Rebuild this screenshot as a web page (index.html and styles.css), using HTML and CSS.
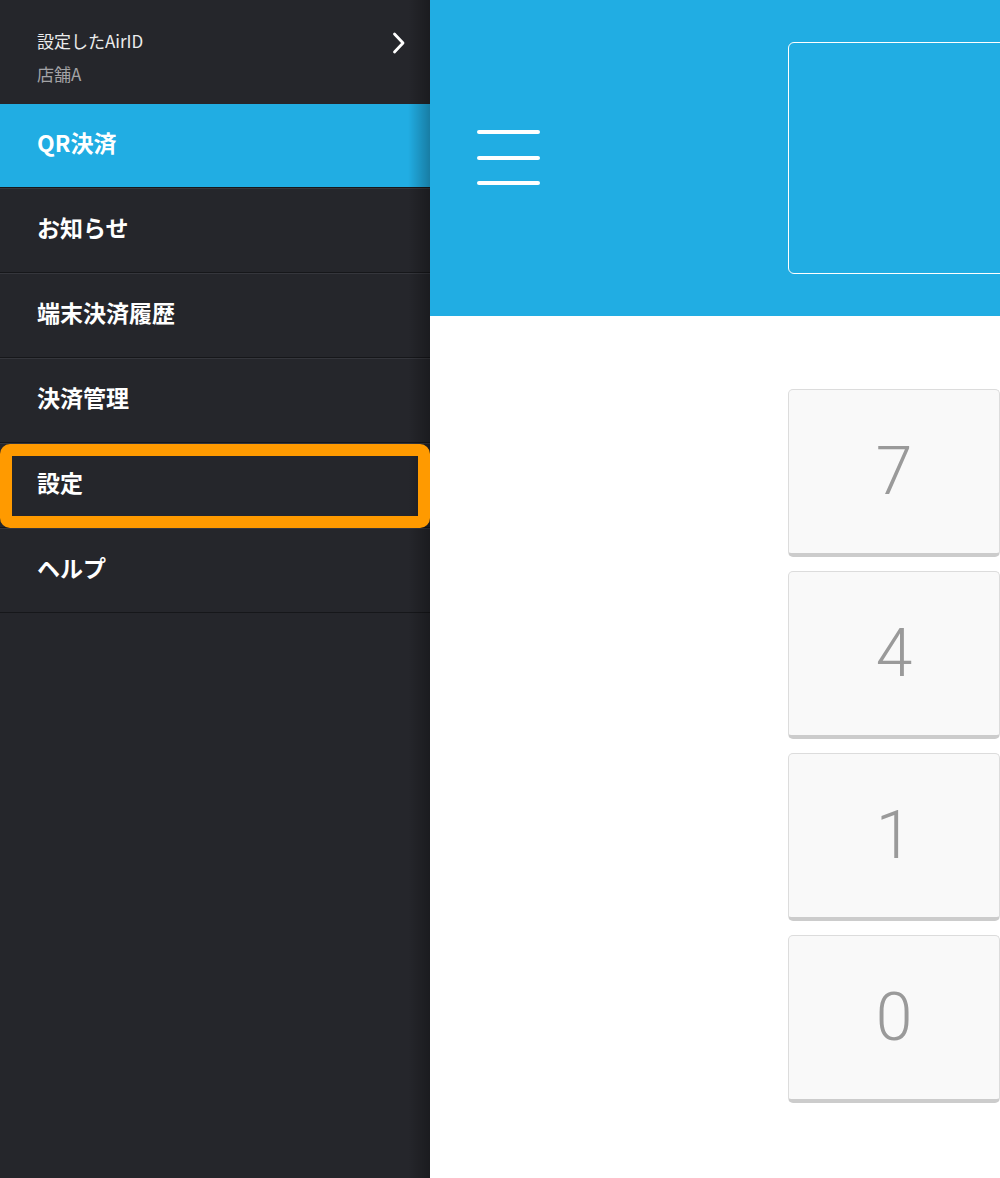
FILE: index.html
```html
<!DOCTYPE html>
<html lang="ja">
<head>
<meta charset="utf-8">
<title>QR決済</title>
<link rel="stylesheet" href="styles.css">
</head>
<body>
<div class="app">
  <nav class="sidebar">
    <div class="account">
      <div class="account-text">
        <div class="account-title">設定したAirID</div>
        <div class="account-store">店舗A</div>
      </div>
      <svg class="chevron" width="14" height="22" viewBox="0 0 14 22"><path d="M2.5 2 L11 11 L2.5 20" fill="none" stroke="#ffffff" stroke-width="2.8" stroke-linecap="round" stroke-linejoin="round"/></svg>
    </div>
    <ul class="menu">
      <li class="menu-item active">QR決済</li>
      <li class="menu-item">お知らせ</li>
      <li class="menu-item">端末決済履歴</li>
      <li class="menu-item">決済管理</li>
      <li class="menu-item highlighted">設定</li>
      <li class="menu-item">ヘルプ</li>
    </ul>
  </nav>
  <main class="main">
    <header class="topbar">
      <div class="hamburger"><span></span><span></span><span></span></div>
      <div class="amount-box"></div>
    </header>
    <section class="keypad">
      <div class="key">7</div>
      <div class="key">4</div>
      <div class="key">1</div>
      <div class="key">0</div>
    </section>
  </main>
</div>
</body>
</html>
```
FILE: styles.css
```css
* { box-sizing: border-box; }
html, body {
  margin: 0;
  padding: 0;
  width: 1000px;
  height: 1178px;
  overflow: hidden;
  background: #ffffff;
  font-family: "Noto Sans CJK JP", "Noto Sans", sans-serif;
}
.app {
  display: flex;
  width: 1000px;
  height: 1178px;
}
.sidebar {
  position: relative;
  width: 430px;
  flex: 0 0 430px;
  height: 1178px;
  background: #25262b;
  color: #ffffff;
}
.sidebar::after {
  content: "";
  position: absolute;
  z-index: 1;
  top: 0;
  right: 0;
  width: 22px;
  height: 100%;
  background: linear-gradient(to right, rgba(0,0,0,0), rgba(0,0,0,0.28));
  pointer-events: none;
}
.account {
  height: 104px;
  display: flex;
  align-items: flex-start;
  justify-content: space-between;
  padding: 29px 24px 0 37px;
}
.account-title {
  font-size: 17px;
  line-height: 24px;
  color: #ececec;
}
.account-store {
  font-size: 17px;
  line-height: 24px;
  margin-top: 9px;
  color: #a3a3a6;
}
.chevron {
  margin-top: 3px;
}
.menu {
  list-style: none;
  margin: 0;
  padding: 0;
}
.menu-item {
  position: relative;
  height: 85px;
  display: flex;
  align-items: center;
  padding-left: 37px;
  padding-bottom: 7px;
  font-size: 23px;
  font-weight: 700;
  color: #ffffff;
  border-top: 1px solid #35363c;
  border-bottom: 1px solid #16171a;
}
.menu-item.active {
  height: 84px;
  background: #21ade3;
  border-top: none;
}
.menu-item.highlighted::after {
  content: "";
  position: absolute;
  z-index: 2;
  left: 0;
  right: 0;
  top: 0;
  bottom: -1px;
  border: 12px solid #ff9a00;
  border-radius: 10px;
}
.main {
  flex: 1;
  display: flex;
  flex-direction: column;
  min-width: 0;
  overflow: hidden;
}
.topbar {
  height: 316px;
  background: #21ade3;
  display: flex;
  align-items: flex-start;
  padding: 42px 0 0 47px;
}
.hamburger {
  width: 63px;
  flex: 0 0 63px;
  margin-top: 88px;
  display: flex;
  flex-direction: column;
  gap: 21.5px;
}
.hamburger span {
  display: block;
  height: 4px;
  border-radius: 2px;
  background: #ffffff;
}
.amount-box {
  margin-left: 248px;
  width: 260px;
  flex: 0 0 260px;
  height: 232px;
  border: 1.5px solid #ffffff;
  border-radius: 6px;
}
.keypad {
  display: flex;
  flex-direction: column;
  gap: 14px;
  padding: 73px 0 0 358px;
}
.key {
  width: 212px;
  flex: 0 0 auto;
  height: 168px;
  background: #f9f9f9;
  border: 1px solid #dcdcdc;
  border-bottom: 4px solid #cccccc;
  border-radius: 5px;
  display: flex;
  align-items: center;
  justify-content: center;
  font-family: Roboto, "Liberation Sans", sans-serif;
  font-weight: 300;
  font-size: 66px;
  color: #9a9a9a;
}
```
